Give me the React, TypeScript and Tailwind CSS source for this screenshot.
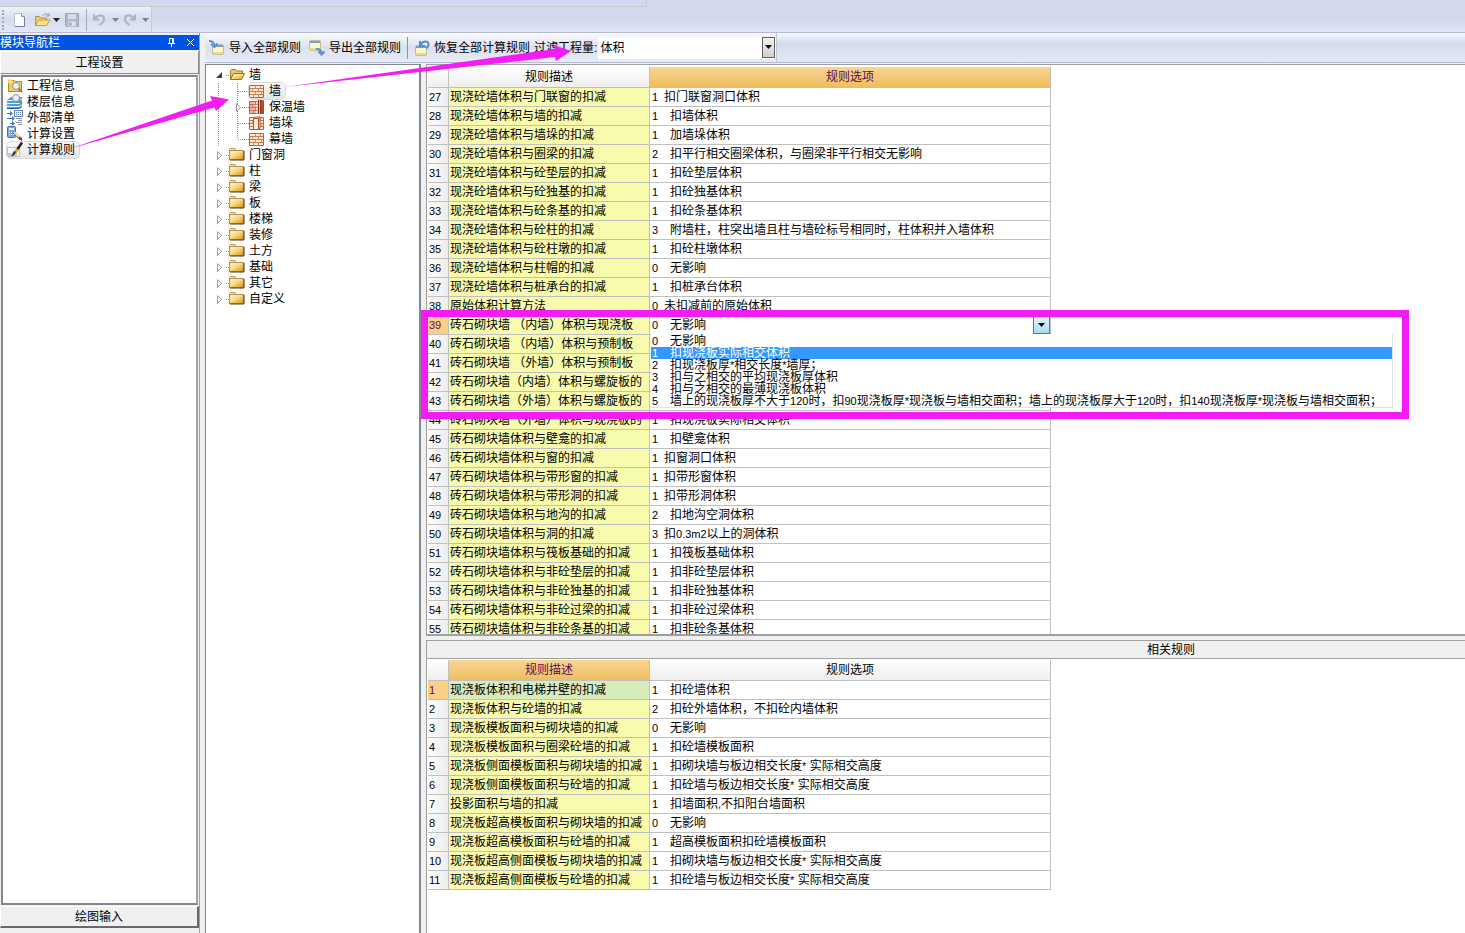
import { useState } from "react";
import type { ReactNode } from "react";

type Rule = { no: number; name: string; code: string; text: string; tight?: boolean };

const r = (no: number, name: string, code: string, text: string, tight = false): Rule => ({ no, name, code, text, tight });

const wallRules: Rule[] = [
  r(27, "现浇砼墙体积与门联窗的扣减", "1", "扣门联窗洞口体积", true),
  r(28, "现浇砼墙体积与墙的扣减", "1", "扣墙体积"),
  r(29, "现浇砼墙体积与墙垛的扣减", "1", "加墙垛体积"),
  r(30, "现浇砼墙体积与圈梁的扣减", "2", "扣平行相交圈梁体积，与圈梁非平行相交无影响"),
  r(31, "现浇砼墙体积与砼垫层的扣减", "1", "扣砼垫层体积"),
  r(32, "现浇砼墙体积与砼独基的扣减", "1", "扣砼独基体积"),
  r(33, "现浇砼墙体积与砼条基的扣减", "1", "扣砼条基体积"),
  r(34, "现浇砼墙体积与砼柱的扣减", "3", "附墙柱，柱突出墙且柱与墙砼标号相同时，柱体积并入墙体积"),
  r(35, "现浇砼墙体积与砼柱墩的扣减", "1", "扣砼柱墩体积"),
  r(36, "现浇砼墙体积与柱帽的扣减", "0", "无影响"),
  r(37, "现浇砼墙体积与桩承台的扣减", "1", "扣桩承台体积"),
  r(38, "原始体积计算方法", "0", "未扣减前的原始体积", true),
  r(39, "砖石砌块墙 （内墙）体积与现浇板", "0", "无影响"),
  r(40, "砖石砌块墙 （内墙）体积与预制板", "", ""),
  r(41, "砖石砌块墙 （外墙）体积与预制板", "", ""),
  r(42, "砖石砌块墙（内墙）体积与螺旋板的", "", ""),
  r(43, "砖石砌块墙（外墙）体积与螺旋板的", "", ""),
  r(44, "砖石砌块墙（外墙）体积与现浇板的", "1", "扣现浇板实际相交体积"),
  r(45, "砖石砌块墙体积与壁龛的扣减", "1", "扣壁龛体积"),
  r(46, "砖石砌块墙体积与窗的扣减", "1", "扣窗洞口体积", true),
  r(47, "砖石砌块墙体积与带形窗的扣减", "1", "扣带形窗体积", true),
  r(48, "砖石砌块墙体积与带形洞的扣减", "1", "扣带形洞体积", true),
  r(49, "砖石砌块墙体积与地沟的扣减", "2", "扣地沟空洞体积"),
  r(50, "砖石砌块墙体积与洞的扣减", "3", "扣0.3m2以上的洞体积", true),
  r(51, "砖石砌块墙体积与筏板基础的扣减", "1", "扣筏板基础体积"),
  r(52, "砖石砌块墙体积与非砼垫层的扣减", "1", "扣非砼垫层体积"),
  r(53, "砖石砌块墙体积与非砼独基的扣减", "1", "扣非砼独基体积"),
  r(54, "砖石砌块墙体积与非砼过梁的扣减", "1", "扣非砼过梁体积"),
  r(55, "砖石砌块墙体积与非砼条基的扣减", "1", "扣非砼条基体积"),
];

const relatedRules: Rule[] = [
  r(1, "现浇板体积和电梯井壁的扣减", "1", "扣砼墙体积"),
  r(2, "现浇板体积与砼墙的扣减", "2", "扣砼外墙体积，不扣砼内墙体积"),
  r(3, "现浇板模板面积与砌块墙的扣减", "0", "无影响"),
  r(4, "现浇板模板面积与圈梁砼墙的扣减", "1", "扣砼墙模板面积"),
  r(5, "现浇板侧面模板面积与砌块墙的扣减", "1", "扣砌块墙与板边相交长度* 实际相交高度"),
  r(6, "现浇板侧面模板面积与砼墙的扣减", "1", "扣砼墙与板边相交长度* 实际相交高度"),
  r(7, "投影面积与墙的扣减", "1", "扣墙面积,不扣阳台墙面积"),
  r(8, "现浇板超高模板面积与砌块墙的扣减", "0", "无影响"),
  r(9, "现浇板超高模板面积与砼墙的扣减", "1", "超高模板面积扣砼墙模板面积"),
  r(10, "现浇板超高侧面模板与砌块墙的扣减", "1", "扣砌块墙与板边相交长度* 实际相交高度"),
  r(11, "现浇板超高侧面模板与砼墙的扣减", "1", "扣砼墙与板边相交长度* 实际相交高度"),
];

const choices = [
  "无影响",
  "扣现浇板实际相交体积",
  "扣现浇板厚*相交长度*墙厚；",
  "扣与之相交的平均现浇板厚体积",
  "扣与之相交的最薄现浇板体积",
  "墙上的现浇板厚不大于120时，扣90现浇板厚*现浇板与墙相交面积；墙上的现浇板厚大于120时，扣140现浇板厚*现浇板与墙相交面积；",
];

/* Sets Latin runs in a narrower size so that they take half a Chinese character each. */
function Mixed({ children }: { children: string }) {
  return (
    <>
      {children.split(/([!-~]+)/).map((part, i) =>
        i % 2 ? <span key={i} className="text-[11px]">{part}</span> : part
      )}
    </>
  );
}

function Down({ className = "" }: { className?: string }) {
  return (
    <svg width="7" height="4" viewBox="0 0 7 4" className={className} aria-hidden="true">
      <path d="M0 0h7L3.5 4z" fill="currentColor" />
    </svg>
  );
}

function NewIcon() {
  return (
    <svg width="16" height="16" viewBox="0 0 16 16" aria-hidden="true">
      <path d="M2.500 1.500h7l3 3v10h-10z" fill="#fbfdff" stroke="#b4c2d3" />
      <path d="M9.500 1.500v3h3" fill="#d7e4f0" stroke="#7e90a9" />
      <path d="M12.500 5v9.500H3" fill="none" stroke="#6d83a2" />
    </svg>
  );
}

function OpenIcon() {
  return (
    <svg width="17" height="16" viewBox="0 0 17 16" aria-hidden="true">
      <path d="M1.500 13.500v-9h4l1 1.500h6v3" fill="#f3cf74" stroke="#b8934a" />
      <path d="M1.500 13.500 4.500 8h11.500l-3.500 5.500z" fill="#ffe08a" stroke="#c49a45" />
      <path d="M9 4c1-2.500 4-3 5.500-.5M15 1v3h-3" fill="none" stroke="#8296b2" />
    </svg>
  );
}

function SaveIcon() {
  return (
    <svg width="16" height="16" viewBox="0 0 16 16" aria-hidden="true">
      <path d="M1.500 1.500h13v13h-12l-1-1z" fill="#b3b8c6" stroke="#a0a6b6" />
      <path d="M4 2h8v5H4z" fill="#d8dce8" />
      <path d="M4.500 9.500h7v5h-7z" fill="#dfe3ec" />
      <path d="M5.500 10.500h2v3h-2z" fill="#9299a9" />
    </svg>
  );
}

function TurnIcon({ redo = false }: { redo?: boolean }) {
  return (
    <svg width="13" height="13" viewBox="0 0 13 13" className={redo ? "-scale-x-100" : ""} aria-hidden="true">
      <path d="M1 1.500v5h5M1.500 6C4 2 10 1 11 5c.5 3-2 5.500-4.500 7" fill="none" stroke="#abb2c6" strokeWidth="2" />
    </svg>
  );
}

function Note({ x = 2, y = 5 }: { x?: number; y?: number }) {
  return (
    <g>
      <rect x={x + 0.5} y={y + 0.5} width="11" height="10" rx="1" fill="#fdf6c8" stroke="#c5bd93" />
      <path d={`M${x + 1} ${y + 1}h10v2H${x + 1}z`} fill="#7c9cc8" />
      <path d={`M${x + 1} ${y + 8}h10v2H${x + 1}z`} fill="#eadb8c" />
    </g>
  );
}

function ImportIcon() {
  return (
    <svg width="16" height="16" viewBox="0 0 16 16" aria-hidden="true">
      <Note x={3} y={4} />
      <path d="M0 1c3 0 5 1 5.500 5M2 4l3.500 3L8.500 3.500" fill="none" stroke="#5f8fd0" strokeWidth="2" />
    </svg>
  );
}

function ExportIcon() {
  return (
    <svg width="16" height="16" viewBox="0 0 16 16" aria-hidden="true">
      <Note x={0} y={0} />
      <path d="M7 9c3.500-.5 5.500 1 5.500 5M9.500 11.500l3 3 3-3" fill="none" stroke="#5f8fd0" strokeWidth="2" />
    </svg>
  );
}

function RestoreIcon() {
  return (
    <svg width="16" height="16" viewBox="0 0 16 16" aria-hidden="true">
      <Note x={1} y={5} />
      <path d="M6 1v5h5M7 5c1-4 7-5 7.500-1 .3 2-1 3.500-2.500 4.500" fill="none" stroke="#5c8bc9" strokeWidth="2" />
    </svg>
  );
}

function Lens({ x, y }: { x: number; y: number }) {
  return (
    <g>
      <path d={`M${x + 2} ${y + 2}l4 4`} stroke="#b9722f" strokeWidth="2" />
      <circle cx={x} cy={y} r="3.500" fill="#e3f3fd" stroke="#7b93ad" />
    </g>
  );
}

function InfoIcon() {
  return (
    <svg width="16" height="16" viewBox="0 0 16 16" aria-hidden="true">
      <path d="M1.500 13.500v-11h6l1 1h6v10z" fill="#f5c95a" stroke="#b98425" />
      <path d="M0 3h6M3 0v6M1 1l4 4M5 1 1 5" stroke="#ffe56a" />
      <Lens x={9} y={8} />
    </svg>
  );
}

function FloorIcon() {
  return (
    <svg width="16" height="16" viewBox="0 0 16 16" aria-hidden="true">
      <path d="M0 6 4 3h11v10l-3 2H0z" fill="#4a9fe0" />
      <path d="M0 6.500h12M0 9.500h12M0 12.500h12M12 7l3-2M12 10l3-2M12 13l3-2" stroke="#eaf6ff" />
      <path d="M0 14.500h12l3-2" fill="none" stroke="#1f5fa5" />
      <Lens x={9} y={4} />
    </svg>
  );
}

function ListIcon() {
  return (
    <svg width="16" height="16" viewBox="0 0 16 16" aria-hidden="true">
      <rect x="7.500" y=".5" width="8" height="6" fill="#eaf2fb" stroke="#6c86a8" />
      <path d="M9 2.500h5M9 4.500h5" stroke="#4f75a8" strokeDasharray="1 1" />
      <path d="M0 3.500h5M0 8.500h6M3 13.500h4" stroke="#3f78c8" />
      <path d="M3 1l3 2.500L3 6zM5 6l3 2.500L5 11zM5 11l3 2.500L5 16z" fill="#3f78c8" />
      <path d="M9 8.500h6M11 10.500h4M9 12.500h6M11 14.500h4" stroke="#8b939c" />
    </svg>
  );
}

function CalcIcon() {
  return (
    <svg width="16" height="16" viewBox="0 0 16 16" aria-hidden="true">
      <rect x=".5" y=".5" width="8" height="11" rx="1" fill="#7ea7e0" stroke="#4a70b0" />
      <path d="M2 2h5v2H2z" fill="#e6f2ff" />
      <path d="M2 6.500h5M2 8.500h5" stroke="#e8f0fc" strokeDasharray="1 1" />
      <path d="m6.500 6 7 7" stroke="#6c5a4a" strokeWidth="3" />
      <path d="m7 6 5 5" stroke="#fbe6a8" strokeWidth="2" />
      <path d="m12 13 3-1.500V15z" fill="#7a3c23" />
    </svg>
  );
}

function RuleIcon() {
  return (
    <svg width="16" height="16" viewBox="0 0 16 16" aria-hidden="true">
      <path d="M.5 5.500h12v9H.5z" fill="#f3f5f8" stroke="#b9c0ca" />
      <path d="M1 11h9v3H1z" fill="#c5ccd6" />
      <path d="M15 .5 10 8" stroke="#221f1c" strokeWidth="2.500" />
      <path d="m10.500 7-2.500 4" stroke="#d3a32c" strokeWidth="3" />
      <path d="M9 10c-1 3-3 4-5 4.500 1-1 1.500-3 3-5.500z" fill="#3b342c" />
    </svg>
  );
}

function FolderIcon({ open = false }: { open?: boolean }) {
  return (
    <svg width="16" height="16" viewBox="0 0 16 16" aria-hidden="true">
      <defs>
        <linearGradient id="folder" x1="0" y1="0" x2="1" y2="1">
          <stop offset="0" stopColor="#fff6cf" />
          <stop offset=".45" stopColor="#fbdc84" />
          <stop offset="1" stopColor="#d48f1c" />
        </linearGradient>
      </defs>
      {open ? (
        <>
          <path d="M1.500 12.500v-9l1-1h4l1 1.500h6v3" fill="#f0c66a" stroke="#9a7a35" />
          <path d="m1.500 12.500 3-6h11l-3 6z" fill="url(#folder)" stroke="#9b6f1d" />
        </>
      ) : (
        <>
          <path d="M.5 5V2.500l1-1H6l1 1.500" fill="#f7e3b0" stroke="#b59b62" />
          <path d="M.5 3.500h14v9H.5z" fill="url(#folder)" stroke="#b08e4a" />
          <path d="M1 13h14V4" fill="none" stroke="#5e3f0c" />
        </>
      )}
    </svg>
  );
}

function BrickIcon({ kind }: { kind: string }) {
  return (
    <svg width="16" height="16" viewBox="0 0 16 16" aria-hidden="true">
      <path d="M.5 2.500h14v12H.5z" fill="#ffe9d6" stroke="#c4622f" />
      <path d="M1 5.500h13M1 8.500h13M1 11.500h13" stroke="#d57a4c" />
      <path d="M6.500 3v2M11.500 3v2M3.500 6v2M9.500 6v2M6.500 9v2M12.500 9v2M4.500 12v2M9.500 12v2" stroke="#dd9068" />
      {kind === "insulated" && (
        <>
          <path d="M8 1h3v14H8z" fill="#f6b7a0" />
          <path d="M1 2h6v13H1z" fill="#c75a4a" opacity=".35" />
          <path d="M9.500 1v14M11.500 1v14M14 1v14" stroke="#8e2f1c" />
          <path d="M12 1h2v14h-2z" fill="#b3502c" />
        </>
      )}
      {kind === "pier" && (
        <path d="M4.500 3.500 6 2h5l-1.500 1.500v11h-5zM9.500 14.500 11 13V2M4.500 3.500h5" fill="#fff0e2" stroke="#b5502a" />
      )}
    </svg>
  );
}

function Branch({ child = false, last = false, state = "" }: { child?: boolean; last?: boolean; state?: string }) {
  return (
    <svg width={child ? 43 : 23} height="16" className="shrink-0" aria-hidden="true">
      <g stroke="#8b8b8b" strokeDasharray="1 1" fill="none">
        {child ? (
          <>
            <path d="M12.500 0v16" />
            <path d={last ? "M31.500 0v8" : "M31.500 0v16"} />
            <path d="M32 8.500h11" />
          </>
        ) : (
          <path d="M20 8.500h3" />
        )}
      </g>
      {state === "open" && <path d="M16 5v6h-6z" fill="#404040" />}
      {state === "closed" && (
        <path d={child ? "M30.500 4.500v8l4-4z" : "M11.500 4.500v8l4-4z"} fill="#fff" stroke="#a0a0a0" />
      )}
    </svg>
  );
}

function TreeRow({ label, icon, selected = false, ...branch }: {
  label: string; icon: ReactNode; selected?: boolean; child?: boolean; last?: boolean; state?: string;
}) {
  return (
    <li className="flex h-4 items-center whitespace-nowrap">
      <Branch {...branch} />
      <button className={selected
        ? "flex h-4 items-center gap-1 rounded-sm bg-linear-to-b from-[#f8f8f8] to-[#e5e5e5] pr-1 outline outline-[#d9d9d9]"
        : "flex h-4 items-center gap-1"}>
        {icon}
        {label}
      </button>
    </li>
  );
}

const navItems = [
  { label: "工程信息", icon: <InfoIcon /> },
  { label: "楼层信息", icon: <FloorIcon /> },
  { label: "外部清单", icon: <ListIcon /> },
  { label: "计算设置", icon: <CalcIcon /> },
  { label: "计算规则", icon: <RuleIcon /> },
];

const categories = ["门窗洞", "柱", "梁", "板", "楼梯", "装修", "土方", "基础", "其它", "自定义"];

const headPlain = "bg-linear-to-b from-white to-[#eeeeee] font-normal";
const headActive = "bg-linear-to-b from-[#f8d594] to-[#efbd5c] font-normal text-[#5c0a52]";

function ChoiceList() {
  const [picked, setPicked] = useState(1);
  return (
    <ul role="listbox" aria-label="规则选项" className="absolute top-[18px] left-px z-10 border-r border-b border-[#dfe1e8] bg-white pt-px">
      {choices.map((text, i) => (
        <li
          key={text}
          role="option"
          aria-selected={i === picked}
          onClick={() => setPicked(i)}
          className={i === picked
            ? "flex h-3 bg-[#3399ff] pr-2.5 pl-px leading-3 whitespace-nowrap text-white"
            : "flex h-3 pr-2.5 pl-px leading-3 whitespace-nowrap"}
        >
          <span className="w-[18px] shrink-0 text-[11px]">{i}</span>
          <span><Mixed>{text}</Mixed></span>
        </li>
      ))}
    </ul>
  );
}

function RuleTable({ rules, activeHead, activeRow, label }: {
  rules: Rule[]; activeHead: "name" | "option"; activeRow: number; label: string;
}) {
  return (
    <table aria-label={label} className="w-[623px] table-fixed border-separate border-spacing-0 leading-[18px] whitespace-nowrap [&_td]:border-r [&_td]:border-b [&_td]:border-[#c0c0c0] [&_th]:border-r [&_th]:border-b [&_th]:border-[#c0c0c0] [&_td]:p-0">
      <colgroup>
        <col className="w-[21px]" />
        <col className="w-[201px]" />
        <col className="w-[401px]" />
      </colgroup>
      <thead>
        <tr className="h-[21px]">
          <th className={headPlain} aria-label="序号" />
          <th className={activeHead === "name" ? headActive : headPlain}>规则描述</th>
          <th className={activeHead === "option" ? headActive : headPlain}>规则选项</th>
        </tr>
      </thead>
      <tbody>
        {rules.map((rule) => (
          <tr key={rule.no} className="h-[19px]">
            <td className={rule.no === activeRow ? "bg-[#fdcf86] text-[#5c0a52]" : "bg-linear-to-r from-white to-[#ececec]"}>
              <div className="h-[18px] pl-px text-[11px]">{rule.no}</div>
            </td>
            <td className={rule.no === activeRow && activeHead === "name" ? "bg-[#d8ebbb]" : "bg-[#f8faac]"}>
              <div className="h-[18px] overflow-hidden pl-px">{rule.name}</div>
            </td>
            <td className="bg-white">
              <div className="relative flex h-[18px] pl-0.5">
                <span className={rule.tight ? "w-3 shrink-0 text-[11px]" : "w-[18px] shrink-0 text-[11px]"}>{rule.code}</span>
                <span><Mixed>{rule.text}</Mixed></span>
                {rule.no === 39 && (
                  <>
                    <button aria-label="展开选项" className="absolute top-0 right-0 flex h-[18px] w-[17px] items-center justify-center border border-[#3c7fb1] bg-linear-to-b from-[#e6f5fd] to-[#a7d9f5] text-black">
                      <Down />
                    </button>
                    <ChoiceList />
                  </>
                )}
              </div>
            </td>
          </tr>
        ))}
      </tbody>
    </table>
  );
}

const toolButton = "flex items-center gap-1 whitespace-nowrap";

export default function App() {
  return (
    <div className="relative flex h-screen min-w-0 flex-col overflow-hidden bg-[#f0f0f0] text-xs text-black [font-family:'Liberation_Sans','Noto_Sans_CJK_SC',sans-serif]">
      <header className="flex h-[33px] shrink-0 flex-col border-b border-[#b5bbd3] bg-linear-to-b from-[#d3d9ec] from-60% to-[#e0e6f6]">
        <div className="h-[7px] w-[647px] border-r border-b border-[#cbcbcd]" />
        <div className="flex h-[25px] w-[152px] items-center border-r border-[#c5cadb] bg-linear-to-b from-[#eef1fa] via-[#d6dcee] to-[#e3e8f5] pl-0.5 text-[#222]">
          <span className="mr-2 h-5 border-l-2 border-dotted border-[#a4acc4]" />
          <button aria-label="新建"><NewIcon /></button>
          <button aria-label="打开" className="ml-1.5 flex items-center gap-0.5"><OpenIcon /><Down /></button>
          <button aria-label="保存" className="ml-1"><SaveIcon /></button>
          <span className="mx-1.5 h-[22px] border-l border-[#a3a7b3]" />
          <button aria-label="撤销" className="flex items-center gap-1.5 text-[#7d8190]"><TurnIcon /><Down /></button>
          <button aria-label="重做" className="ml-1 flex items-center gap-1.5 text-[#7d8190]"><TurnIcon redo /><Down /></button>
        </div>
      </header>

      <div className="flex min-h-0 flex-1">
        <aside className="flex w-[200px] shrink-0 flex-col border-r border-[#a0a0a0] pt-0.5">
          <div className="flex h-[15px] shrink-0 items-center bg-[#0054e3] pr-1 text-white">
            <h2 className="flex-1 leading-4">模块导航栏</h2>
            <button aria-label="固定" className="mr-2.5">
              <svg width="9" height="9" viewBox="0 0 9 9" aria-hidden="true">
                <path d="M2.500 5V.5h4V5M5.500 1v4M1 5.500h7M4.500 6v3" fill="none" stroke="#fff" />
              </svg>
            </button>
            <button aria-label="关闭">
              <svg width="9" height="9" viewBox="0 0 9 9" aria-hidden="true">
                <path d="m1 1 7 7M8 1 1 8" stroke="#fff" />
              </svg>
            </button>
          </div>
          <button className="mt-px h-[23px] shrink-0 border border-t-white border-r-[#8a8a8a] border-b-[#8a8a8a] border-l-white pt-px">工程设置</button>
          <ul className="mx-px mt-px flex-1 border-2 border-[#82868f] border-r-[#a0a4ac] bg-white pt-px pl-1">
            {navItems.map((item, i) => (
              <li key={item.label}>
                <button className={i === 4
                  ? "flex h-4 items-center gap-1 rounded-sm bg-linear-to-b from-[#f8f8f8] to-[#e5e5e5] pr-1 outline outline-[#d9d9d9]"
                  : "flex h-4 items-center gap-1"}>
                  {item.icon}
                  {item.label}
                </button>
              </li>
            ))}
          </ul>
          <button className="mt-px mb-[5px] h-[22px] shrink-0 border border-t-white border-r-2 border-b-2 border-r-[#696969] border-b-[#696969] border-l-white">绘图输入</button>
        </aside>

        <main className="ml-[5px] flex min-w-0 flex-1 flex-col">
          <div className="flex h-[30px] shrink-0 border-b border-[#b5bbd3] bg-linear-to-b from-[#f6f8fd] via-[#d5dbec] via-35% to-[#e3e8f6]">
            <div className="flex items-center border-r border-[#c3c6d0] bg-linear-to-b from-[#fafbfe] via-[#dbe1f0] to-[#e8ecf7] pl-1">
              <button className={toolButton}><ImportIcon />导入全部规则</button>
              <button className="ml-2 flex items-center gap-1 whitespace-nowrap"><ExportIcon />导出全部规则</button>
              <span className="mx-1.5 h-[22px] border-l border-[#8e939f]" />
              <button className={toolButton}><RestoreIcon />恢复全部计算规则</button>
              <label htmlFor="quantity" className="ml-1 whitespace-nowrap">过滤工程量:</label>
              <div className="relative ml-px flex">
                <select id="quantity" defaultValue="体积" className="h-[22px] w-[178px] appearance-none bg-white pl-0.5">
                  <option>体积</option>
                </select>
                <span className="pointer-events-none absolute top-0 right-px flex h-[21px] w-[13px] items-center justify-center border border-[#606060] bg-linear-to-b from-[#f3f3f3] to-[#cfcfcf]">
                  <Down />
                </span>
              </div>
            </div>
          </div>

          <div className="mt-px flex min-h-0 flex-1">
            <nav className="w-[216px] shrink-0 border-t border-r-2 border-l border-[#82868f] bg-white pt-0.5" aria-label="构件">
              <ul>
                <TreeRow label="墙" icon={<FolderIcon open />} state="open" />
                <TreeRow label="墙" icon={<BrickIcon kind="wall" />} child selected />
                <TreeRow label="保温墙" icon={<BrickIcon kind="insulated" />} child state="closed" />
                <TreeRow label="墙垛" icon={<BrickIcon kind="pier" />} child />
                <TreeRow label="幕墙" icon={<BrickIcon kind="wall" />} child last />
                {categories.map((c) => (
                  <TreeRow key={c} label={c} icon={<FolderIcon />} state="closed" />
                ))}
              </ul>
            </nav>

            <div className="ml-[5px] flex min-w-0 flex-1 flex-col">
              <section className="min-h-0 flex-[571_1_0%] overflow-hidden border-t border-b-2 border-l border-[#a0a0a0] bg-white pt-0.5 pl-px">
                <RuleTable rules={wallRules} activeHead="option" activeRow={39} label="计算规则" />
              </section>
              <h3 className="mt-1 h-[18px] shrink-0 border-t border-l border-[#a0a0a0] pl-[450px] text-center leading-[18px]">相关规则</h3>
              <section className="min-h-0 flex-[275_1_0%] overflow-hidden border-t border-l border-[#a0a0a0] bg-white pt-px pl-px">
                <RuleTable rules={relatedRules} activeHead="name" activeRow={1} label="相关规则" />
              </section>
            </div>
          </div>
        </main>
      </div>

      <div className="pointer-events-none absolute top-[310px] left-[421px] h-[109px] w-[988px] border-[7px] border-[#f41cf4]" />
      <svg width="600" height="160" viewBox="0 0 600 160" className="pointer-events-none absolute top-0 left-0" aria-hidden="true">
        <path d="M69 149 212 100.500 210 96 229 99.500 216 111 214.500 107.500z" fill="#f41cf4" />
        <path d="M285 87 555 49 554 45 571 51 556 61 555 57z" fill="#f41cf4" />
      </svg>
    </div>
  );
}
